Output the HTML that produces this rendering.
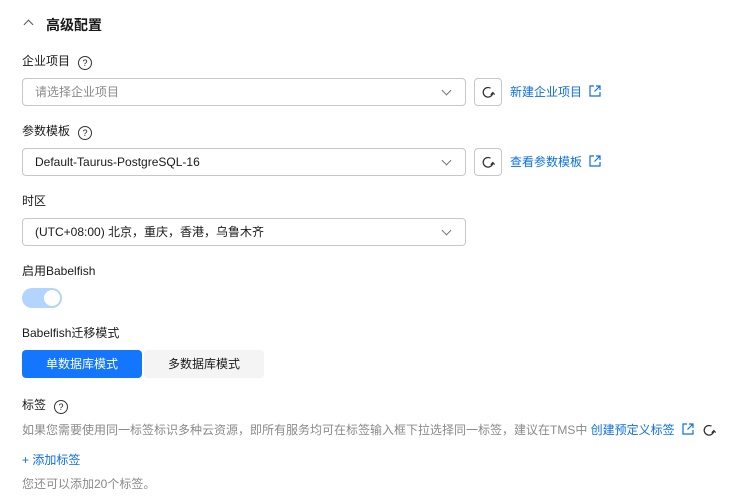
<!DOCTYPE html><html><head><meta charset="utf-8"><style>
body{margin:0;width:738px;height:500px;background:#fff;font-family:"Liberation Sans","Noto Sans CJK SC",sans-serif;font-size:12px;color:#191919;position:relative;overflow:hidden}
.a{position:absolute;white-space:nowrap}
.q{display:inline-block;width:12px;height:12px;border:1.2px solid #333;border-radius:50%;font-size:9px;line-height:12px;text-align:center;margin-left:8px;vertical-align:-1px}
.inp{position:absolute;left:22px;height:26px;border:1px solid #c7c7c7;border-radius:4px;line-height:26px;padding-left:12px;width:430px}
.chev{position:absolute;right:15px;top:8px;width:6px;height:6px;border-right:1px solid #777;border-bottom:1px solid #777;transform:rotate(45deg)}
.rb{position:absolute;left:474px;width:26px;height:26px;border:1px solid #c7c7c7;border-radius:4px}
.lk{color:#0d6fe6}
</style></head><body>
<div class="a" style="left:25px;top:21px;width:6px;height:6px;border-left:1.2px solid #555;border-top:1.2px solid #555;transform:rotate(45deg)"></div>
<div class="a" style="left:46px;top:15px;font-size:14px;font-weight:bold">高级配置</div>
<div class="a" style="left:22px;top:52px">企业项目<span class="q">?</span></div>
<div class="inp" style="top:78px;color:#8a8a8a">请选择企业项目<div class="chev"></div></div>
<div class="rb" style="top:78px"><svg width="26" height="26" viewBox="0 0 26 26"><path d="M17.8 13.5A4.8 4.8 0 1 1 15.5 9.2" fill="none" stroke="#333" stroke-width="1.3"/><path d="M15.8 15.8l2-2.2 1.8 2" fill="none" stroke="#333" stroke-width="1.3"/></svg></div>
<div class="a lk" style="left:510px;top:83px">新建企业项目 <svg width="12" height="12" viewBox="0 0 12 12" style="vertical-align:-1px;margin-left:4px"><path d="M5 1H1v10h10V7M7 1h4v4M11 1L5.5 6.5" fill="none" stroke="#0d6fe6" stroke-width="1.2"/></svg></div>
<div class="a" style="left:22px;top:122px">参数模板<span class="q">?</span></div>
<div class="inp" style="top:148px">Default-Taurus-PostgreSQL-16<div class="chev"></div></div>
<div class="rb" style="top:148px"><svg width="26" height="26" viewBox="0 0 26 26"><path d="M17.8 13.5A4.8 4.8 0 1 1 15.5 9.2" fill="none" stroke="#333" stroke-width="1.3"/><path d="M15.8 15.8l2-2.2 1.8 2" fill="none" stroke="#333" stroke-width="1.3"/></svg></div>
<div class="a lk" style="left:510px;top:153px">查看参数模板 <svg width="12" height="12" viewBox="0 0 12 12" style="vertical-align:-1px;margin-left:4px"><path d="M5 1H1v10h10V7M7 1h4v4M11 1L5.5 6.5" fill="none" stroke="#0d6fe6" stroke-width="1.2"/></svg></div>
<div class="a" style="left:22px;top:192px">时区</div>
<div class="inp" style="top:218px">(UTC+08:00) 北京，重庆，香港，乌鲁木齐<div class="chev"></div></div>
<div class="a" style="left:22px;top:262px">启用Babelfish</div>
<div class="a" style="left:22px;top:288px;width:40px;height:20px;border-radius:10px;background:#b3d4fc"><div style="position:absolute;right:2px;top:2px;width:16px;height:16px;border-radius:50%;background:#fff"></div></div>
<div class="a" style="left:22px;top:324px">Babelfish迁移模式</div>
<div class="a" style="left:22px;top:350px;width:120px;height:28px;background:#1476ff;color:#fff;border-radius:4px;text-align:center;line-height:28px">单数据库模式</div>
<div class="a" style="left:144px;top:350px;width:120px;height:28px;background:#f4f4f4;border-radius:4px;text-align:center;line-height:28px">多数据库模式</div>
<div class="a" style="left:22px;top:396px">标签<span class="q">?</span></div>
<div class="a" style="left:22px;top:421px;color:#8a8a8a">如果您需要使用同一标签标识多种云资源，即所有服务均可在标签输入框下拉选择同一标签，建议在TMS中 <span class="lk">创建预定义标签</span> <svg width="12" height="12" viewBox="0 0 12 12" style="vertical-align:-1px;margin-left:4px"><path d="M5 1H1v10h10V7M7 1h4v4M11 1L5.5 6.5" fill="none" stroke="#0d6fe6" stroke-width="1.2"/></svg> <svg width="16" height="14" viewBox="6 6 14 14" style="vertical-align:-3px;margin-left:4px"><path d="M17.8 13.5A4.8 4.8 0 1 1 15.5 9.2" fill="none" stroke="#333" stroke-width="1.3"/><path d="M15.8 15.8l2-2.2 1.8 2" fill="none" stroke="#333" stroke-width="1.3"/></svg></div>
<div class="a lk" style="left:22px;top:451px">+ 添加标签</div>
<div class="a" style="left:22px;top:475px;color:#8a8a8a">您还可以添加20个标签。</div>
</body></html>
